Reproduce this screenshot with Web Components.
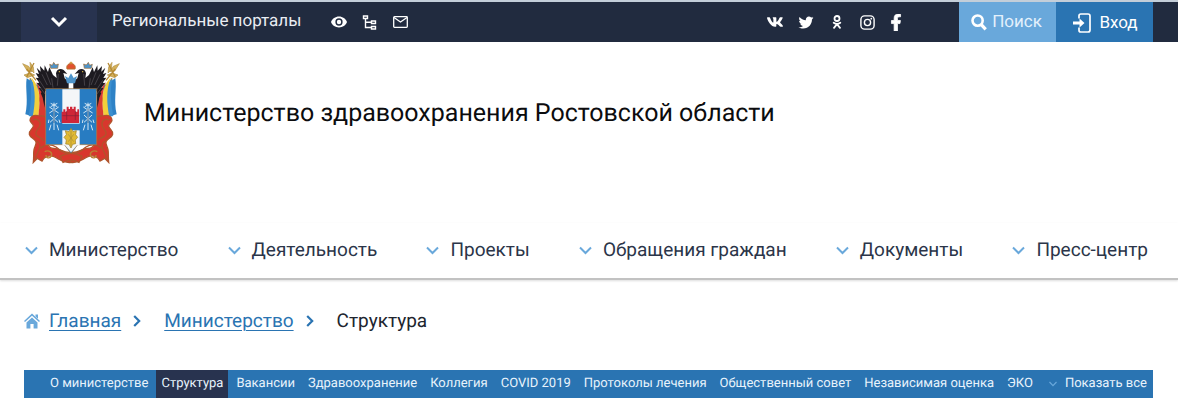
<!DOCTYPE html>
<html lang="ru">
<head>
<meta charset="utf-8">
<meta name="viewport" content="width=device-width, initial-scale=1">
<title>Министерство здравоохранения Ростовской области</title>
<style>
  body {
    margin: 0;
    background: #fff;
    font-family: Roboto, "Liberation Sans", sans-serif;
    text-rendering: geometricPrecision;
    color: #2b3549;
    --navy: #212b3f;
    --navy-light: #28334f;
    --blue: #2a74b2;
    --sky: #69a8db;
  }
</style>
</head>
<body>
<site-topbar></site-topbar>
<site-header>Министерство здравоохранения Ростовской области</site-header>
<main-nav>
  <nav-item>Министерство</nav-item>
  <nav-item>Деятельность</nav-item>
  <nav-item>Проекты</nav-item>
  <nav-item>Обращения граждан</nav-item>
  <nav-item>Документы</nav-item>
  <nav-item>Пресс-центр</nav-item>
</main-nav>
<bread-crumbs></bread-crumbs>
<sub-menu>
  <sub-item>О министерстве</sub-item>
  <sub-item active>Структура</sub-item>
  <sub-item>Вакансии</sub-item>
  <sub-item>Здравоохранение</sub-item>
  <sub-item>Коллегия</sub-item>
  <sub-item>COVID 2019</sub-item>
  <sub-item>Протоколы лечения</sub-item>
  <sub-item>Общественный совет</sub-item>
  <sub-item>Независимая оценка</sub-item>
  <sub-item>ЭКО</sub-item>
</sub-menu>

<script>
// name: [width, height, viewBox, markup]
const ICONS = {
  'chevron-bold': [18, 12, '0 0 18 12', '<path d="M2 2l7 7 7-7" fill="none" stroke="currentColor" stroke-width="3"/>'],
  'chevron': [13, 9, '0 0 13 9', '<path d="M1 1.500l5.500 5.500L12 1.500" fill="none" stroke="currentColor" stroke-width="2"/>'],
  'chevron-small': [8, 6, '0 0 8 6', '<path d="M.5 1L4 4.600 7.500 1" fill="none" stroke="currentColor" stroke-width="1.200"/>'],
  'arrow': [8, 12, '0 0 8 12', '<path d="M1.200 1l5 5-5 5" fill="none" stroke="currentColor" stroke-width="2.200"/>'],
  'eye': [16, 12, '1 4 22 16', '<path d="M12 4.500C7 4.500 2.730 7.610 1 12c1.730 4.390 6 7.500 11 7.500s9.270-3.110 11-7.500c-1.730-4.390-6-7.500-11-7.500zM12 17a5 5 0 1 1 0-10 5 5 0 0 1 0 10zm0-8a3 3 0 1 0 0 6 3 3 0 0 0 0-6z" fill="currentColor"/>'],
  'tree': [16, 15, '0 0 16 15', '<path d="M1.500 1h4v2.500h-4zM9.500 6h4v2.500h-4zM9.500 11.500h4V14h-4zM3.500 3.500v9h6M3.500 7.300h6" fill="none" stroke="currentColor" stroke-width="1.400"/>'],
  'mail': [15, 12, '0 0 15 12', '<rect x=".7" y=".7" width="13.600" height="10.600" rx=".8" fill="none" stroke="currentColor" stroke-width="1.300"/><path d="M1 1.500l6.500 4.500L14 1.500" fill="none" stroke="currentColor" stroke-width="1.300"/>'],
  'vk': [16, 16, '18 0 540 512', '<path d="M545 117.700c3.700-12.500 0-21.700-17.800-21.700h-58.900c-15 0-21.900 7.900-25.600 16.700 0 0-30 73.100-72.400 120.500-13.700 13.700-20 18.100-27.500 18.100-3.700 0-9.400-4.400-9.400-16.900V117.700c0-15-4.200-21.700-16.600-21.700h-92.600c-9.400 0-15 7-15 13.500 0 14.200 21.200 17.500 23.400 57.500v86.800c0 19-3.400 22.500-10.900 22.500-20 0-68.600-73.400-97.400-157.400-5.800-16.300-11.500-22.900-26.600-22.900H38.800c-16.800 0-20.200 7.900-20.200 16.700 0 15.600 20 93.100 93.100 195.500C160.400 378.100 229 416 291.400 416c37.500 0 42.100-8.400 42.100-22.900 0-66.800-3.400-73.100 15.400-73.100 8.700 0 23.700 4.400 58.700 38.100 40 40 46.600 57.900 69 57.900h58.900c16.800 0 25.300-8.400 20.400-25-11.200-34.900-86.900-106.700-90.300-111.500-8.700-11.200-6.200-16.200 0-26.200.1-.1 72-101.300 79.400-135.600z" fill="currentColor"/>'],
  'twitter': [16, 15, '0 0 512 512', '<path d="M459.370 151.716c.325 4.548.325 9.097.325 13.645 0 138.720-105.583 298.558-298.558 298.558-59.452 0-114.680-17.219-161.137-47.106 8.447.974 16.568 1.299 25.340 1.299 49.055 0 94.213-16.568 130.274-44.832-46.132-.975-84.792-31.188-98.112-72.772 6.498.974 12.995 1.624 19.818 1.624 9.421 0 18.843-1.300 27.614-3.573-48.081-9.747-84.143-51.980-84.143-102.985v-1.299c13.969 7.797 30.214 12.670 47.431 13.319-28.264-18.843-46.781-51.005-46.781-87.391 0-19.492 5.197-37.360 14.294-52.954 51.655 63.675 129.300 105.258 216.365 109.807-1.624-7.797-2.599-15.918-2.599-24.040 0-57.828 46.782-104.934 104.934-104.934 30.213 0 57.502 12.670 76.670 33.137 23.715-4.548 46.456-13.320 66.599-25.340-7.798 24.366-24.366 44.833-46.132 57.827 21.117-2.273 41.584-8.122 60.426-16.243-14.292 20.791-32.161 39.308-52.628 54.253z" fill="currentColor"/>'],
  'ok': [16, 14, '0 0 16 14', '<g fill="none" stroke="currentColor" stroke-width="1.800" stroke-linecap="round"><circle cx="8" cy="3.500" r="2.500"/><path d="M4.700 7.800c2 1.500 4.600 1.500 6.600 0M8 9.200l-3 3.600M8 9.200l3 3.600"/></g>'],
  'instagram': [15, 15, '0 0 15 15', '<g fill="none" stroke="currentColor" stroke-width="1.400"><rect x=".9" y=".9" width="13.200" height="13.200" rx="3.600"/><circle cx="7.500" cy="7.500" r="3.100"/></g><circle cx="11.300" cy="3.700" r=".9" fill="currentColor"/>'],
  'facebook': [12, 17, '15 0 290 512', '<path d="M279.140 288l14.220-92.660h-88.910v-60.130c0-25.350 12.420-50.060 52.240-50.060h40.420V6.260S260.430 0 225.360 0c-73.220 0-121.080 44.380-121.080 124.720v70.620H22.890V288h81.390v224h100.170V288z" fill="currentColor" stroke="currentColor" stroke-width="24"/>'],
  'search': [16, 17, '0 0 16 17', '<g fill="none" stroke="currentColor"><circle cx="6.600" cy="6.600" r="5.100" stroke-width="2.600"/><path d="M10.300 10.600l4.400 4.800" stroke-width="3.200"/></g>'],
  'login': [18, 20, '0 0 18 20', '<path d="M6 5.500V2.800C6 1.500 6.500 1 7.800 1H15c1.500 0 2 .5 2 2v14c0 1.500-.5 2-2 2H7.800C6.500 19 6 18.500 6 17.200V14.500" fill="none" stroke="currentColor" stroke-width="1.700"/><path d="M0 8.500h6.500V5.500l5 4.500-5 4.500v-3H0z" fill="currentColor"/>'],
  'home': [16, 16, '0 0 16 16', '<path d="M.5 8.500L8 1.600l7.500 6.900" fill="none" stroke="currentColor" stroke-width="1.500"/><path d="M11.500 1.500H14v4.300l-2.500-2.300zM8 4.600l5.500 5V15.500H9.600V11H6.400v4.500H2.500V9.600z" fill="currentColor"/>'],
};

class SvgIcon extends HTMLElement {
  connectedCallback() {
    const [w, h, box, body] = ICONS[this.getAttribute('name')];
    if (!this.shadowRoot) this.attachShadow({ mode: 'open' });
    this.shadowRoot.innerHTML = `
      <style>:host { display: inline-flex; flex: none; } svg { display: block; }</style>
      <svg width="${w}" height="${h}" viewBox="${box}" aria-hidden="true">${body}</svg>
    `;
  }
}

class SiteTopbar extends HTMLElement {
  constructor() {
    super();
    this.attachShadow({ mode: 'open' }).innerHTML = `
      <style>
        :host {
          display: flex;
          align-items: stretch;
          height: 40px;
          padding: 0 25px 0 21px;
          background: var(--navy);
          border-top: 2px solid #c3ced9;
          color: #fff;
        }
        a { color: inherit; text-decoration: none; display: flex; align-items: center; }
        button {
          display: flex;
          align-items: center;
          justify-content: center;
          margin: 0;
          padding: 0;
          border: 0;
          color: #fff;
          font: 17px/24px Roboto, "Liberation Sans", sans-serif;
          text-rendering: inherit;
          cursor: pointer;
        }
        .drop { width: 76px; background: var(--navy-light); }
        .portals { margin-left: 15px; padding-bottom: 3px; font-size: 17px; color: #e9edf3; }
        .icons { display: flex; align-items: center; gap: 15px; }
        .tools { margin-left: 30px; }
        .social { margin-left: auto; margin-right: 57px; }
        .search, .login { width: 97px; }
        .search { gap: 5px; padding-right: 2px; background: var(--sky); color: #e3f0fb; }
        .search svg-icon { color: #fff; }
        .login { gap: 8px; padding: 2px 0 0 2px; background: var(--blue); }
      </style>
      <button class="drop" aria-label="Открыть список порталов"><svg-icon name="chevron-bold"></svg-icon></button>
      <a class="portals" href="#">Региональные порталы</a>
      <div class="icons tools">
        <a href="#" aria-label="Версия для слабовидящих"><svg-icon name="eye"></svg-icon></a>
        <a href="#" aria-label="Карта сайта"><svg-icon name="tree"></svg-icon></a>
        <a href="#" aria-label="Почта"><svg-icon name="mail"></svg-icon></a>
      </div>
      <div class="icons social">
        <a href="#" aria-label="ВКонтакте"><svg-icon name="vk"></svg-icon></a>
        <a href="#" aria-label="Twitter"><svg-icon name="twitter"></svg-icon></a>
        <a href="#" aria-label="Одноклассники"><svg-icon name="ok"></svg-icon></a>
        <a href="#" aria-label="Instagram"><svg-icon name="instagram"></svg-icon></a>
        <a href="#" aria-label="Facebook"><svg-icon name="facebook"></svg-icon></a>
      </div>
      <button class="search"><svg-icon name="search"></svg-icon>Поиск</button>
      <button class="login"><svg-icon name="login"></svg-icon>Вход</button>
    `;
  }
}

class CoatOfArms extends HTMLElement {
  constructor() {
    super();
    this.attachShadow({ mode: 'open' }).innerHTML = `
      <style>:host { display: block; flex: none; } svg { display: block; }</style>
      <svg width="98" height="106" viewBox="36 26 294 318" role="img" aria-label="Герб Ростовской области">
        <defs>
          <g id="side">
            <!-- flags -->
            <path d="M60 78L106 180" stroke="#b58a35" stroke-width="5"/>
            <path d="M50 78C45 110 56 145 46 186l22 6 20-90z" fill="#2e82c6"/>
            <path d="M62 80c22 25 16 70 8 114l-14-3c8-38 10-75 4-111z" fill="#3b8fd0"/>
            <path d="M66 78c28 30 26 76 18 118l-16-2c8-40 10-82-4-116z" fill="#f2cf3c"/>
            <path d="M78 88c26 30 32 72 30 122l-24-12c6-40 8-78-6-110z" fill="#d83b32"/>
            <path d="M38 34l18 8 10 16-14-2zM60 30l10 14 2 18-10-10zM42 68l18-6 14 6-22 8z" fill="#d5b15a" stroke="#b39248" stroke-width="2"/>
            <path d="M50 50l28 34M72 32L50 74" stroke="#b58a35" stroke-width="4"/>
            <!-- eagle wing and head -->
            <path d="M80 46l12 12-2-17 13 14 1-16 10 20 4-14 11 23 11 9-2-14c2-12 13-16 23-10l11 12-12-3 4 16 12 10v28h-70l-2 50-6-30-6-14 3-2-9-12 6-2-12-14 8-1-11-15 9 1-9-15 10 3z" fill="#1d1a20"/>
            <path d="M96 66l16 32M88 84l18 28M108 60l15 38M125 78l4 28M91 106l15 20M145 65l-3 35" stroke="#59545b" stroke-width="2" fill="none"/>
            <circle cx="148" cy="58" r="2" fill="#e9c445"/>
            <path d="M122 48l-3-12 8 3 4-9 6 8 8-3-2 13z" fill="#4e94ca" stroke="#9c6a35" stroke-width="2"/>
            <!-- ribbon -->
            <path d="M84 190C70 186 60 194 60 204c0 8 12 10 10 18s-14 12-12 24c2 10 16 12 20 22 2 8-4 14-6 24s0 22-2 38l12-12 14 8c6-14 22-18 34-14 20 8 28 22 54 18v-30c-24 4-32-12-52-12-12 0-16-4-20-14l-4-78c-4-6-14-6-24-6z" fill="#d8372d" stroke="#b0542c" stroke-width="4"/>
            <path d="M68 204c10-8 24 0 22 14s-16 16-12 28 18 8 24 20M92 288c14-14 34-12 46-4s22 22 44 18M80 266c8 4 12 14 8 24s-12 20-12 32" fill="none" stroke="#b0542c" stroke-width="4"/>
            <path d="M104 298c12-6 24 2 20 12s-16 8-16-2" fill="none" stroke="#b98234" stroke-width="4"/>
          </g>
          <g id="crossed-maces" fill="none" stroke="#d2e6f4" stroke-width="3">
            <path d="M132 151v82M118 164l28 18M146 164l-28 18M120 188l24 22M144 188l-24 22M123 217l-5 17M141 217l5 17M117 202l-2 10M147 202l3 10M122 153l20 10M142 153l-20 10"/>
            <path d="M132 170v42" stroke="#1f4269" stroke-width="2"/>
          </g>
        </defs>
        <use href="#side"/>
        <use href="#side" transform="matrix(-1 0 0 1 366 0)"/>
        <path d="M171 93l-6-22 10 6 8-14 8 14 10-6-6 22z" fill="#4e94ca"/>
        <path d="M171 50c-6-22 30-22 24 0z" fill="#e2512e" stroke="#b5702d" stroke-width="3"/>
        <path d="M183 28v8M179 31h8" stroke="#d19b40" stroke-width="3"/>
        <path d="M107 109h153v168h-57l-20 27-20-27h-56z" fill="#287cc2" stroke="#b37b3d" stroke-width="2"/>
        <path d="M157 111h52v168h-8l-18 21-18-21h-8z" fill="#f4f6f8"/>
        <path d="M155 214h56v20h-56z" fill="#287cc2"/>
        <path d="M155 212v-34h5v-7h6v7h4v-15h6v7h4v-7h7v7h4v-7h6v15h5v-7h5v41z" fill="#cf2638"/>
        <path d="M157 190h51M170 176v27M196 176v27" stroke="#832337" stroke-width="2"/>
        <use href="#crossed-maces"/>
        <use href="#crossed-maces" x="102"/>
        <path d="M183 228l6 10 10-3-2 12 6 8-7 8 1 11-9 2-5 11-6-11-10-1 2-12-7-8 7-8-3-12 11 3z" fill="#e0b934" stroke="#9c7e25" stroke-width="2"/>
        <path d="M175 246l16 22M191 246l-16 22M183 236v44" stroke="#a88c33" stroke-width="2"/>
        <path d="M150 312c20-12 46-12 66 0l-9 18c-15-8-33-8-48 0z" fill="#d8372d" stroke="#b0542c" stroke-width="4"/>
      </svg>
    `;
  }
}

class SiteHeader extends HTMLElement {
  constructor() {
    super();
    this.attachShadow({ mode: 'open' }).innerHTML = `
      <style>
        :host { display: flex; align-items: center; gap: 24px; padding: 19px 22px 56px; color: #0c0c0e; }
        h1 { margin: 0; font-size: 25px; line-height: 32px; font-weight: 400; }
      </style>
      <coat-of-arms></coat-of-arms>
      <h1><slot></slot></h1>
    `;
  }
}

class MainNav extends HTMLElement {
  constructor() {
    super();
    this.attachShadow({ mode: 'open' }).innerHTML = `
      <style>
        :host { display: block; border-bottom: 2px solid #c2c2c2; box-shadow: 0 1px 2px #ddd; }
        nav { display: flex; justify-content: space-between; padding: 15px 30px 16px 25px; }
      </style>
      <nav aria-label="Основное меню"><slot></slot></nav>
    `;
  }
}

class NavItem extends HTMLElement {
  constructor() {
    super();
    this.attachShadow({ mode: 'open' }).innerHTML = `
      <style>
        :host { display: block; font-size: 19px; line-height: 24px; white-space: nowrap; }
        a { display: flex; align-items: center; gap: 11px; color: inherit; text-decoration: none; }
        svg-icon { color: var(--sky); }
      </style>
      <a href="#"><svg-icon name="chevron"></svg-icon><span><slot></slot></span></a>
    `;
  }
}

class BreadCrumbs extends HTMLElement {
  constructor() {
    super();
    this.attachShadow({ mode: 'open' }).innerHTML = `
      <style>
        :host { display: block; padding: 29px 24px 37px; font-size: 19px; line-height: 24px; }
        nav { display: flex; align-items: center; }
        a { color: var(--blue); text-decoration-thickness: 1px; text-underline-offset: 3px; }
        .home { margin-right: 9px; color: var(--sky); }
        .sep { margin: 0 23px 0 12px; color: var(--blue); }
        .current { color: #20252e; }
      </style>
      <nav aria-label="Навигационная цепочка">
        <svg-icon class="home" name="home"></svg-icon>
        <a href="#">Главная</a>
        <svg-icon class="sep" name="arrow"></svg-icon>
        <a href="#">Министерство</a>
        <svg-icon class="sep" name="arrow"></svg-icon>
        <span class="current" aria-current="page">Структура</span>
      </nav>
    `;
  }
}

class SubMenu extends HTMLElement {
  constructor() {
    super();
    this.attachShadow({ mode: 'open' }).innerHTML = `
      <style>
        :host { display: block; margin: 0 25px 11px 24px; background: var(--blue); color: #e8f3fc; }
        nav { display: flex; justify-content: space-between; padding: 0 6px 0 21px; font-size: 13px; line-height: 28px; }
        button {
          display: flex;
          align-items: center;
          gap: 8px;
          margin: 0 0 0 8px;
          padding: 0;
          border: 0;
          background: none;
          color: inherit;
          font: inherit;
          text-rendering: inherit;
          white-space: nowrap;
          cursor: pointer;
        }
        svg-icon { color: var(--sky); }
      </style>
      <nav aria-label="Разделы">
        <slot></slot>
        <button><svg-icon name="chevron-small"></svg-icon>Показать все</button>
      </nav>
    `;
  }
}

class SubItem extends HTMLElement {
  constructor() {
    super();
    this.attachShadow({ mode: 'open' }).innerHTML = `
      <style>
        :host { display: block; white-space: nowrap; }
        :host([active]) { background: var(--navy-light); }
        a { display: block; padding: 0 5px; color: inherit; text-decoration: none; }
      </style>
      <a href="#"><slot></slot></a>
    `;
  }
}

customElements.define('svg-icon', SvgIcon);
customElements.define('site-topbar', SiteTopbar);
customElements.define('coat-of-arms', CoatOfArms);
customElements.define('site-header', SiteHeader);
customElements.define('main-nav', MainNav);
customElements.define('nav-item', NavItem);
customElements.define('bread-crumbs', BreadCrumbs);
customElements.define('sub-menu', SubMenu);
customElements.define('sub-item', SubItem);
</script>
</body>
</html>
